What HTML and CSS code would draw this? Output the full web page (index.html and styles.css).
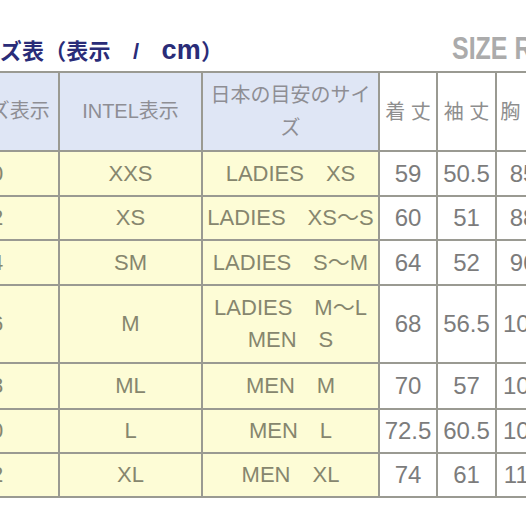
FILE: index.html
```html
<!DOCTYPE html>
<html lang="ja">
<head>
<meta charset="utf-8">
<title>サイズ表</title>
<link rel="stylesheet" href="styles.css">
</head>
<body>
<div class="page">
  <div class="topbar">
    <h1 class="title">サイズ表（表示　/　<span class="cm">cm</span>）</h1>
    <div class="brand"><span class="brand-text">SIZE REFERENCE</span></div>
  </div>
  <div class="chart">
    <div class="c hd">サイズ表示</div>
    <div class="c hd">INTEL表示</div>
    <div class="c hd">日本の目安のサイズ</div>
    <div class="c hw">着 丈</div>
    <div class="c hw">袖 丈</div>
    <div class="c hw">胸 囲</div>

    <div class="c y first">0</div><div class="c y">XXS</div><div class="c y">LADIES　XS</div>
    <div class="c n">59</div><div class="c n">50.5</div><div class="c n">85</div>

    <div class="c y first">2</div><div class="c y">XS</div><div class="c y">LADIES　XS〜S</div>
    <div class="c n">60</div><div class="c n">51</div><div class="c n">88</div>

    <div class="c y first">4</div><div class="c y">SM</div><div class="c y">LADIES　S〜M</div>
    <div class="c n">64</div><div class="c n">52</div><div class="c n">96</div>

    <div class="c y first">6</div><div class="c y">M</div><div class="c y two">LADIES　M〜L<br>MEN　S</div>
    <div class="c n">68</div><div class="c n">56.5</div><div class="c n">100</div>

    <div class="c y first">8</div><div class="c y">ML</div><div class="c y">MEN　M</div>
    <div class="c n">70</div><div class="c n">57</div><div class="c n">104</div>

    <div class="c y first wide">10</div><div class="c y">L</div><div class="c y">MEN　L</div>
    <div class="c n">72.5</div><div class="c n">60.5</div><div class="c n">108</div>

    <div class="c y first wide">12</div><div class="c y">XL</div><div class="c y">MEN　XL</div>
    <div class="c n">74</div><div class="c n">61</div><div class="c n">112</div>
  </div>
</div>
</body>
</html>
```

FILE: styles.css
```css
html, body {
  margin: 0;
  padding: 0;
  background: #ffffff;
}

.page {
  width: 526px;
  height: 526px;
  overflow: hidden;
  position: relative;
  font-family: "Liberation Sans", "Noto Sans CJK JP", sans-serif;
}

.topbar {
  height: 71px;
  display: flex;
  justify-content: space-between;
  align-items: flex-start;
}

.title {
  margin: 0 0 0 -44px;
  padding-top: 36px;
  font-size: 22px;
  line-height: 28px;
  font-weight: bold;
  color: #2a2c78;
  white-space: nowrap;
  letter-spacing: 0.2px;
}

.cm {
  font-size: 27px;
}

.brand {
  flex: 0 0 auto;
  width: 74px;
  overflow: hidden;
  padding-top: 30px;
}

.brand-text {
  display: inline-block;
  font-size: 32px;
  line-height: 36px;
  font-weight: bold;
  color: #ababab;
  white-space: nowrap;
  transform: scaleX(0.78);
  transform-origin: left center;
}

.chart {
  margin-left: -60px;
  display: grid;
  grid-template-columns: 116px 141px 175px 56px 57px 52px;
  grid-template-rows: 77px 43px 42px 43px 76px 44px 42px 42px;
  gap: 2px;
  padding: 2px;
  width: max-content;
  background: #9a9a92;
}

.c {
  display: flex;
  align-items: center;
  justify-content: center;
  text-align: center;
  white-space: nowrap;
  line-height: 26px;
}

.hd {
  background: #dfe6f5;
  color: #8e8e94;
  font-size: 20px;
  line-height: 33px;
  white-space: normal;
}

.hw {
  background: #ffffff;
  color: #8e8e8e;
  font-size: 20px;
}

.y {
  background: #fdfcd6;
  color: #86866e;
  font-size: 22px;
}

.first {
  padding-right: 6px;
}

.first.wide {
  padding-right: 18px;
}

.two {
  line-height: 32px;
}

.n {
  background: #ffffff;
  color: #7c7c7c;
  font-size: 24px;
}
```
